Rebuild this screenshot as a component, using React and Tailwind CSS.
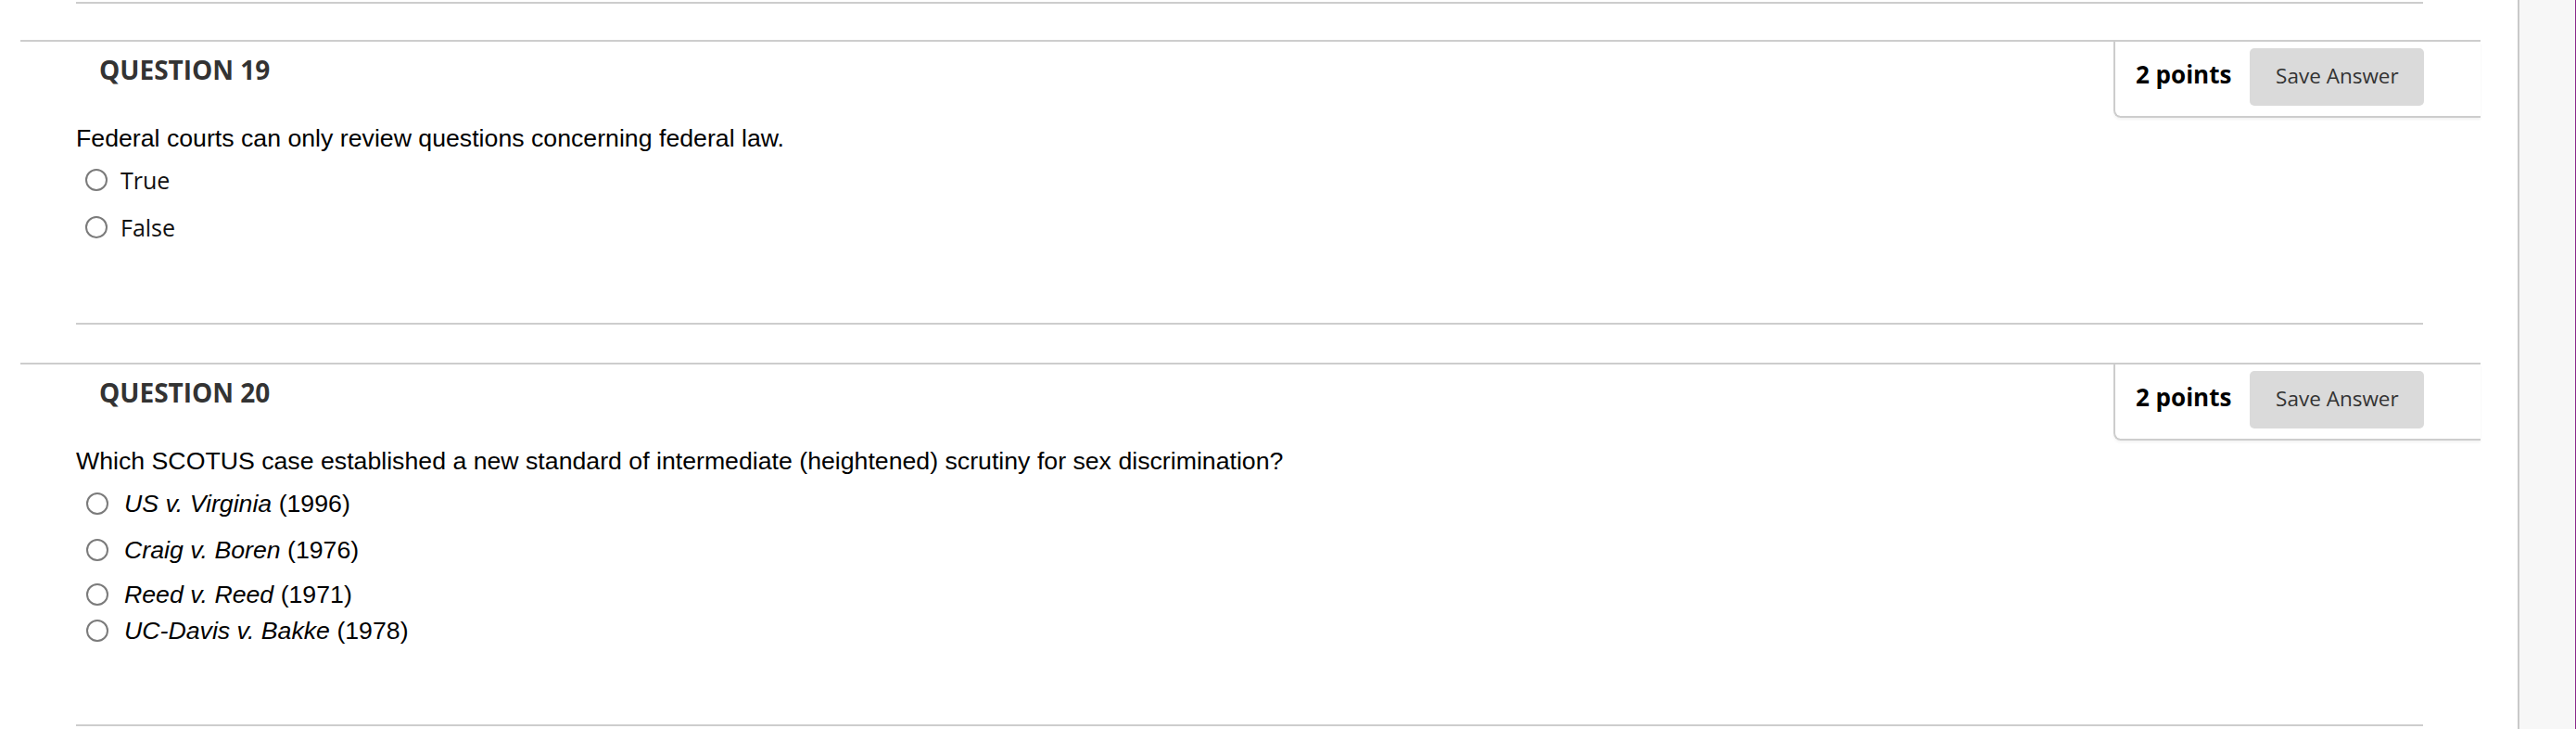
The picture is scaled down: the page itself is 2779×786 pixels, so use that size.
import React from 'react';

const Radio = () => (
  <span className="w-[24px] h-[24px] rounded-full border-2 border-[#7b7b7b] bg-white shrink-0" />
);

function PointsBox() {
  return (
    <div className="w-[396px] h-[82px] border-l-2 border-b-2 border-[#cdcdcd] rounded-bl-[8px] shadow-[0_2px_3px_rgba(0,0,0,0.05)] flex items-start pt-[7px] pl-[22px] gap-[20px] font-['Open_Sans',sans-serif]">
      <span className="text-[26px] font-bold leading-[56px] text-black">2 points</span>
      <button className="w-[188px] h-[62px] rounded-[5px] bg-[#dadada] text-[22.5px] text-[#333] leading-[58px] pb-[3px]">
        Save Answer
      </button>
    </div>
  );
}

function Header({ n, top }) {
  return (
    <div className={`ml-[22px] w-[2654px] border-t-2 border-[#cdcdcd] flex justify-between ${top}`}>
      <h2 className="ml-[85px] mt-[11px] text-[28px] leading-[38px] font-bold text-[#333] font-['Open_Sans',sans-serif]">
        QUESTION {n}
      </h2>
      <PointsBox />
    </div>
  );
}

const cases = [
  { name: 'US v. Virginia', year: '(1996)', mt: 'mt-[16px]' },
  { name: 'Craig v. Boren', year: '(1976)', mt: 'mt-[20px]' },
  { name: 'Reed v. Reed', year: '(1971)', mt: 'mt-[18px]' },
  { name: 'UC-Davis v. Bakke', year: '(1978)', mt: 'mt-[9px]' },
];

export default function App() {
  return (
    <div className="flex w-[2779px] h-[786px] overflow-hidden bg-white">
      <div className="w-[2716px] shrink-0">
        <div className="ml-[82px] w-[2532px] h-[2px] bg-[#cdcdcd] mt-[2px]" />

        {/* question 19 */}
        <Header n={19} top="mt-[39px]" />
        <div className="pl-[82px] pt-[7px]">
          <p className="text-[26.7px] leading-[30px] text-black font-['Liberation_Sans',Arial,sans-serif]">
            Federal courts can only review questions concerning federal law.
          </p>
          {['True', 'False'].map((o, i) => (
            <label
              key={o}
              className={`flex items-center gap-[14px] ml-[10px] h-[30px] text-[25px] leading-[30px] text-[#111] font-['Open_Sans',sans-serif] ${i === 0 ? 'mt-[15px]' : 'mt-[21px]'}`}
            >
              <Radio />
              {o}
            </label>
          ))}
        </div>
        <div className="ml-[82px] w-[2532px] h-[2px] bg-[#cdcdcd] mt-[88px]" />

        {/* question 20 */}
        <Header n={20} top="mt-[41px]" />
        <div className="pl-[82px] pt-[7px] font-['Liberation_Sans',Arial,sans-serif] text-black">
          <p className="text-[26.7px] leading-[30px]">
            Which SCOTUS case established a new standard of intermediate (heightened) scrutiny for sex discrimination?
          </p>
          {cases.map((c) => (
            <label key={c.name} className={`flex items-center gap-[17px] ml-[11px] h-[30px] text-[26.7px] leading-[30px] ${c.mt}`}>
              <Radio />
              <span>
                <i>{c.name}</i> {c.year}
              </span>
            </label>
          ))}
        </div>
        <div className="ml-[82px] w-[2532px] h-[2px] bg-[#cdcdcd] mt-[86px]" />
      </div>

      {/* scrollbar gutter */}
      <div className="flex-1 h-full border-l-2 border-[#c9c9c9] bg-[#f7f7f7] border-r border-r-[#8b2a8b]" />
    </div>
  );
}
